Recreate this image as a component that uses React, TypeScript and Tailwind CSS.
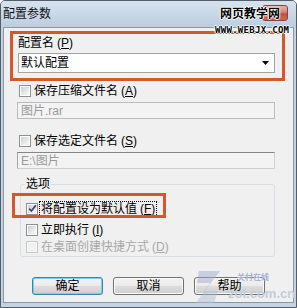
import clsx from 'clsx';

const cjk = "font-['Liberation_Sans','Noto_Sans_CJK_SC',sans-serif]";

// small win-vista style checkbox
function Check({ checked, disabled }: { checked?: boolean; disabled?: boolean }) {
    return (
        <span
            className={clsx(
                'w-[12px] h-[12px] border p-[1px] shrink-0 flex',
                disabled ? 'border-[#c8c8c8] bg-[#f7f7f7]' : 'border-[#8e8f8f] bg-white'
            )}
        >
            <span
                className={clsx(
                    'flex-1 flex items-center justify-center',
                    disabled
                        ? 'bg-[#f2f2f2]'
                        : 'bg-[linear-gradient(135deg,#cbcfd5_0%,#eceef0_70%,#f6f6f6_100%)]'
                )}
            >
                {checked && (
                    <svg width="9" height="9" viewBox="0 0 9 9">
                        <path d="M1.2 4.6 L3.4 7 L7.8 1.4" fill="none" stroke="#34487a" strokeWidth="1.7" />
                    </svg>
                )}
            </span>
        </span>
    );
}

function Key({ k }: { k: string }) {
    return (
        <span className="ml-[3px]">
            (<span className="underline underline-offset-[1px]">{k}</span>)
        </span>
    );
}

function Button({ label, primary }: { label: string; primary?: boolean }) {
    return (
        <div
            className={clsx(
                'w-[71px] h-[18px] rounded-[3px] border flex items-center justify-center text-[12px] leading-none text-black',
                'bg-[linear-gradient(#f3f3f3_0%,#ebebeb_48%,#dddddd_52%,#cfcfcf_100%)]',
                primary
                    ? 'border-[#3a84ae] shadow-[inset_0_0_0_1px_#7ad0ec]'
                    : 'border-[#707070] shadow-[inset_0_0_0_1px_#fbfbfb]'
            )}
        >
            {label}
        </div>
    );
}

export default function App() {
    return (
        <div className={clsx('w-[297px] h-[308px] overflow-hidden bg-white', cjk)}>
            <div className="relative w-[297px] h-[308px] flex flex-col border border-[#565d66] rounded-t-[5px] bg-[#c3d3e4]">
                {/* title bar */}
                <div className="h-[26px] flex pl-[2px] bg-[linear-gradient(#d6e2ef,#bccee1)] rounded-t-[4px]">
                    <span className="mt-[6px] text-[12px] leading-[14px] text-[#111]">配置参数</span>
                    <div className="ml-auto mr-[8px] mt-[4px] w-[26px] h-[16px] rounded-[3px] border border-[#8a4139] bg-[linear-gradient(#eab1a6_0%,#d98273_45%,#c4503f_55%,#cf6a55_100%)]" />
                </div>

                {/* client area */}
                <div className="flex-1 mx-[2px] mb-[4px] border border-[#8a98a8] bg-[#f0f0f0] flex flex-col items-start text-[12px] leading-[14px] text-black">
                    <div className="ml-[6px] mt-[3px] w-[275px] h-[50px] border-[3px] border-[#d2592a] pl-[5px] pr-[7px] pt-[2px] flex flex-col">
                        <div className="h-[14px] flex items-center">
                            配置名<Key k="P" />
                        </div>
                        <div className="mt-[3px] h-[20px] w-full border border-[#a3a3a3] bg-white flex items-center justify-between pl-[2px] pr-[5px]">
                            <span>默认配置</span>
                            <svg width="7" height="4" viewBox="0 0 7 4">
                                <path d="M0 0 H7 L3.5 4 Z" fill="#000" />
                            </svg>
                        </div>
                    </div>

                    <div className="mt-[3px] ml-[15px] h-[13px] flex items-center gap-[3px]">
                        <Check />
                        <span>
                            保存压缩文件名<Key k="A" />
                        </span>
                    </div>
                    <div className="mt-[5px] ml-[13px] w-[258px] h-[17px] border border-[#bcbcbc] bg-[#f3f3f3] pl-[3px] flex items-center text-[#9a9a9a]">
                        图片.rar
                    </div>

                    <div className="mt-[15px] ml-[15px] h-[13px] flex items-center gap-[3px]">
                        <Check />
                        <span>
                            保存选定文件名<Key k="S" />
                        </span>
                    </div>
                    <div className="mt-[5px] ml-[13px] w-[258px] h-[17px] border border-[#cfcfcf] border-t-[#868686] border-l-[#a4a4a4] bg-[#f3f3f3] pl-[3px] flex items-center text-[#9a9a9a]">
                        E:\图片
                    </div>

                    <fieldset className="mt-[8px] ml-[16px] w-[255px] h-[80px] border border-[#d5dfe5] rounded-[3px] flex flex-col">
                        <legend className="ml-[4px] px-[1px] text-[12px] leading-[14px]">选项</legend>
                        <div className="relative mt-[11px] ml-[5px] h-[13px] flex items-center gap-[2px]">
                            <Check checked />
                            <span className="px-[1px] outline outline-1 outline-dotted outline-black">
                                将配置设为默认值<Key k="F" />
                            </span>
                            <div className="absolute left-[-14px] top-[-9px] w-[154px] h-[25px] border-[3px] border-[#d2592a] pointer-events-none" />
                        </div>
                        <div className="mt-[8px] ml-[5px] h-[13px] flex items-center gap-[3px]">
                            <Check />
                            <span>
                                立即执行<Key k="I" />
                            </span>
                        </div>
                        <div className="mt-[4px] ml-[5px] h-[13px] flex items-center gap-[3px] text-[#a8a8a8]">
                            <Check disabled />
                            <span>
                                在桌面创建快捷方式<Key k="D" />
                            </span>
                        </div>
                    </fieldset>

                    <div className="mt-[20px] ml-[28px] flex gap-[10px]">
                        <Button label="确定" primary />
                        <Button label="取消" />
                        <Button label="帮助" />
                    </div>
                </div>

                {/* watermarks lying over the dialog */}
                <div className="absolute left-[219px] top-[6px] text-[12px] leading-[14px] font-bold text-black [text-shadow:1px_0_0_#fff,-1px_0_0_#fff,0_1px_0_#fff,0_-1px_0_#fff]">
                    网页教学网
                </div>
                <div className="absolute left-[214px] top-[25px] font-['DejaVu_Sans_Mono',monospace] text-[9px] leading-[9px] font-bold tracking-[0.3px] text-black [text-shadow:1px_0_0_#fff,-1px_0_0_#fff,0_1px_0_#fff,0_-1px_0_#fff]">
                    WWW.WEBJX.COM
                </div>
                <svg className="absolute left-[193px] top-[268px] opacity-50" width="28" height="36" viewBox="0 0 28 36">
                    <path d="M5 2 H26 L11 22 H24 L20 34 H2 L16 14 H3 Z" fill="#b3bdd9" />
                    <path d="M16 14 H3 L5 2 H26 Z" fill="#9aa6cc" opacity="0.7" />
                </svg>
                <div className="absolute left-[236px] top-[272px] text-[8px] leading-[10px] font-bold text-[#aeb0dc]">关村在线</div>
                <div className="absolute left-[227px] top-[286px] font-['Liberation_Sans',sans-serif] text-[13px] leading-[13px] font-bold text-[#c3ccd9]">
                    zol.com.cn
                </div>
            </div>
        </div>
    );
}
